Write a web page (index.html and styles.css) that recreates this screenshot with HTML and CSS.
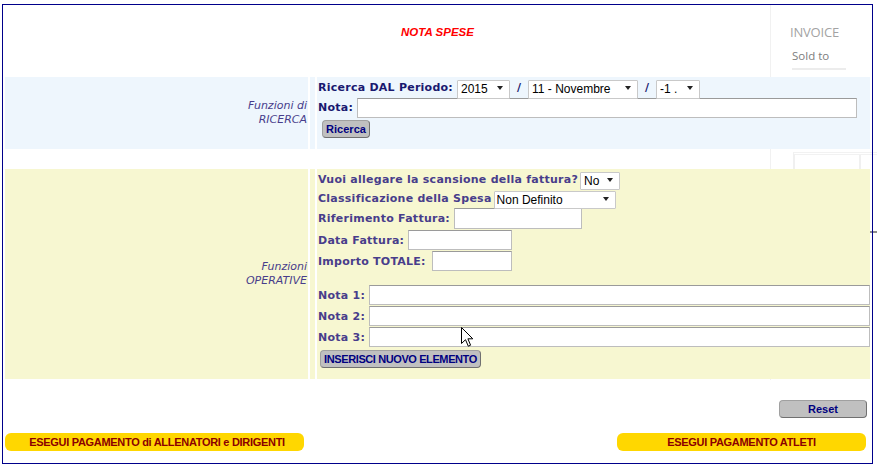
FILE: index.html
```html
<!DOCTYPE html>
<html lang="it">
<head>
    <meta charset="UTF-8">
    <title>Nota Spese</title>
    <link rel="stylesheet" href="styles.css">
</head>
<body>
    <!-- faded window left behind the page -->
    <div class="ghost">
        <div class="ghost-col"></div>
        <div class="ghost-title">INVOICE</div>
        <div class="ghost-sold">Sold to</div>
        <div class="ghost-rule"></div>
        <div class="ghost-grid"></div>
        <div class="ghost-tick"></div>
    </div>

    <div class="frame">
        <div class="head">
            <span class="title">NOTA SPESE</span>
        </div>

        <form class="band band-search">
            <div class="side"><em>Funzioni di<br>RICERCA</em></div>
            <div class="spacer"></div>
            <div class="cell">
                <div class="row">
                    <label class="lbl">Ricerca DAL Periodo:</label>
                    <span class="sel w-year"><select><option>2015</option></select></span>
                    <span class="slash">/</span>
                    <span class="sel w-month"><select><option>11 - Novembre</option></select></span>
                    <span class="slash">/</span>
                    <span class="sel w-day"><select><option>-1 .</option></select></span>
                </div>
                <div class="row">
                    <label class="lbl">Nota:</label>
                    <input type="text" class="inp w-nota">
                </div>
                <button type="button" class="btn-gray btn-search">Ricerca</button>
            </div>
        </form>

        <form class="band band-ops">
            <div class="side"><em>Funzioni<br>OPERATIVE</em></div>
            <div class="spacer"></div>
            <div class="cell">
                <div class="row">
                    <label class="lbl">Vuoi allegare la scansione della fattura?</label>
                    <span class="sel w-yesno"><select><option>No</option></select></span>
                </div>
                <div class="row">
                    <label class="lbl">Classificazione della Spesa</label>
                    <span class="sel w-class"><select><option>Non Definito</option></select></span>
                </div>
                <div class="row">
                    <label class="lbl">Riferimento Fattura:</label>
                    <input type="text" class="inp w-rif">
                </div>
                <div class="row">
                    <label class="lbl">Data Fattura:</label>
                    <input type="text" class="inp w-data">
                </div>
                <div class="row">
                    <label class="lbl">Importo TOTALE:</label>
                    <input type="text" class="inp w-importo">
                </div>
                <div class="notes">
                    <div class="row">
                        <label class="lbl">Nota 1:</label>
                        <input type="text" class="inp grow">
                    </div>
                    <div class="row">
                        <label class="lbl">Nota 2:</label>
                        <input type="text" class="inp grow">
                    </div>
                    <div class="row">
                        <label class="lbl">Nota 3:</label>
                        <input type="text" class="inp grow">
                    </div>
                </div>
                <button type="button" class="btn-gray btn-insert">INSERISCI NUOVO ELEMENTO</button>
            </div>
        </form>

        <div class="reset-row">
            <button type="button" class="btn-gray btn-reset">Reset</button>
        </div>

        <div class="pay-row">
            <button type="button" class="btn-pay pay-staff">ESEGUI PAGAMENTO di ALLENATORI e DIRIGENTI</button>
            <button type="button" class="btn-pay pay-atleti">ESEGUI PAGAMENTO ATLETI</button>
        </div>
    </div>

    <svg class="cursor" width="13" height="21" viewBox="0 0 13 21">
        <path d="M0.5 0.5 L0.5 16.5 L4.5 12.7 L7.3 19.2 L9.6 18.2 L6.9 11.8 L11.8 11.8 Z" fill="#fff" stroke="#000" stroke-width="1"/>
    </svg>
</body>
</html>
```

FILE: styles.css
```css
* {
    margin: 0;
    padding: 0;
    box-sizing: border-box;
}
body {
    font-family: "DejaVu Sans", Verdana, sans-serif;
    background: #ffffff;
    width: 877px;
    height: 468px;
    overflow: hidden;
    position: relative;
}

/* ghost window behind */
.ghost { position: absolute; top: 0; left: 0; width: 877px; height: 468px; z-index: 0; pointer-events: none; }
.ghost-col { position: absolute; left: 770px; top: 5px; width: 1px; height: 375px; background: #f1f1f1; }
.ghost-title { position: absolute; left: 790px; top: 23px; font-family: "Open Sans", sans-serif; font-size: 13px; color: #a3a3a3; letter-spacing: -0.2px; }
.ghost-sold { position: absolute; left: 792px; top: 48px; font-family: "Open Sans", sans-serif; font-size: 11.5px; color: #7d7d7d; }
.ghost-rule { position: absolute; left: 792px; top: 68px; width: 54px; height: 2px; background: #ececec; }
.ghost-grid { position: absolute; left: 793px; top: 152px; width: 84px; height: 20px; border-left: 2px solid #f0f0f0; border-top: 3px double #f2f2f2; }
.ghost-grid::after { content: ""; position: absolute; left: 64px; top: 0; width: 2px; height: 18px; background: #f0f0f0; }
.ghost-tick { position: absolute; left: 870px; top: 231px; width: 7px; height: 2px; background: #8c8c8c; }

.frame {
    position: relative;
    z-index: 1;
    margin: 4px 0 0 2px;
    width: 871px;
    height: 460px;
    border: 1px solid #00008b;
    padding: 0 2px;
}
.head { height: 72px; text-align: center; padding-top: 16px; }
.title { font-family: "Liberation Sans", Arial, sans-serif; font-size: 11.5px; font-weight: bold; font-style: italic; color: #ff0000; }

.band { display: grid; grid-template-columns: 303px 5px 1fr; column-gap: 2px; }
.band-search { height: 72px; }
.band-ops { height: 210px; margin-top: 20px; }
.band-search .side, .band-search .spacer, .band-search .cell { background: #eef6fd; }
.band-ops .side, .band-ops .spacer, .band-ops .cell { background: #f7f7d1; }

.side { display: flex; align-items: center; justify-content: flex-end; text-align: right; padding-right: 1px; }
.side em { font-size: 11px; line-height: 14px; color: #483d8b; }

.cell { padding: 1px 0 0 1px; }
.row { display: flex; align-items: center; gap: 4px; }
.lbl { font-size: 11px; line-height: 13px; font-weight: bold; letter-spacing: 0.25px; white-space: nowrap; }
.band-search .lbl, .slash { color: #191970; }
.band-ops .lbl { color: #483d8b; }
.slash { font-size: 11px; font-weight: bold; margin: 0 3px; }

.sel { position: relative; display: inline-block; height: 19px; }
.sel select {
    appearance: none;
    -webkit-appearance: none;
    width: 100%;
    height: 100%;
    border: 1px solid #c9c9c9;
    border-radius: 1px;
    background: #ffffff;
    font-family: "Liberation Sans", Arial, sans-serif;
    font-size: 12px;
    color: #000;
    padding: 0 0 0 3px;
}
.sel::after { content: ""; position: absolute; right: 7px; top: 8px; border-left: 3.5px solid transparent; border-right: 3.5px solid transparent; border-top: 4px solid #222; pointer-events: none; }
.w-year { width: 53px; }
.w-month { width: 110px; }
.w-day { width: 44px; }
.w-yesno { width: 40px; height: 18px; margin-left: -2px; }
.w-class { width: 122px; height: 18px; margin-left: -2px; }
.w-class select { padding-left: 2px; }

.inp { height: 20px; border: 1px solid #bdbdbd; border-top-color: #9a9a9a; background: #ffffff; }
.w-nota { width: 500px; margin-top: 1px; }
.w-rif { width: 128px; height: 21px; }
.w-data { width: 104px; }
.w-importo { width: 80px; margin-left: 2px; }
.grow { flex: 1; }

.band-ops .row { margin-bottom: 1px; }
.notes { margin-top: 14px; }

.btn-gray {
    font-family: "Liberation Sans", Arial, sans-serif;
    font-size: 11px;
    font-weight: bold;
    color: #000080;
    background: #c0c0c0;
    border: 1px solid #a0a0a0;
    border-right-color: #707070;
    border-bottom-color: #707070;
    border-radius: 4px;
    height: 18px;
    cursor: pointer;
}
.btn-search { margin: 2px 0 0 4px; width: 48px; }
.btn-insert { margin: 1px 0 0 2px; width: 161px; letter-spacing: -0.4px; }
.reset-row { display: flex; justify-content: flex-end; margin-top: 21px; padding-right: 3px; }
.btn-reset { width: 88px; }

.pay-row { display: flex; justify-content: space-between; margin-top: 15px; padding-right: 4px; }
.btn-pay {
    font-family: "Liberation Sans", Arial, sans-serif;
    font-size: 11px;
    font-weight: bold;
    letter-spacing: -0.3px;
    color: #8b0000;
    background: #ffd700;
    border: none;
    border-radius: 6px;
    height: 18px;
    cursor: pointer;
}
.pay-staff { width: 299px; padding-left: 5px; }
.pay-atleti { width: 249px; }

.cursor { position: absolute; left: 461px; top: 327px; z-index: 5; }
```
